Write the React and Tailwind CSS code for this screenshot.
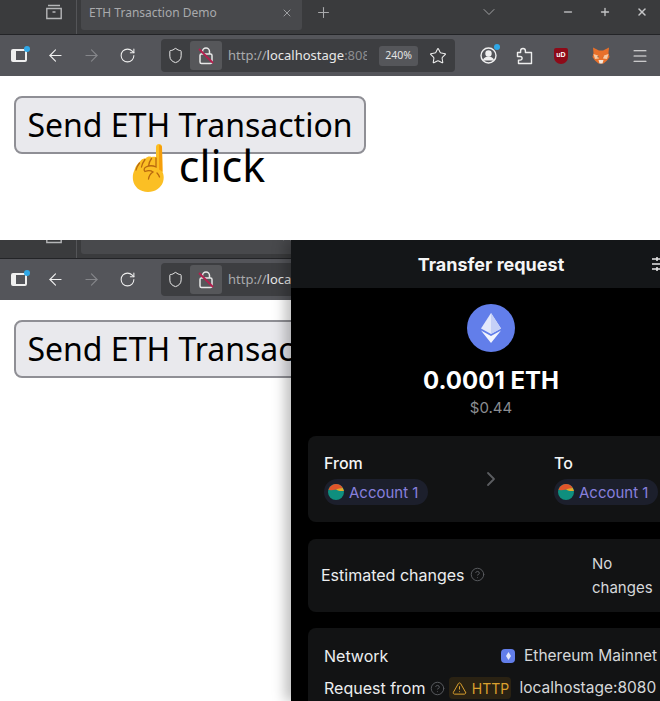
import { ArrowLeft, ArrowRight, RotateCw, Shield, Star, Menu, ChevronDown, ChevronRight, Plus, X, Minus, CircleHelp, TriangleAlert } from "lucide-react";

function TabBar({ height, title }) {
  return (
    <div className={`${height} flex items-end overflow-hidden bg-[#3a3b3d] border-b border-[#232427] shrink-0`}>
      <div className="h-[34px] w-full flex shrink-0 relative">
        <div className="w-[77px] border-r border-[#545558] flex justify-end pr-[13px] pt-[4px] shrink-0">
          <svg width="18" height="16" viewBox="0 0 18 16" fill="none" stroke="#b5b6b8" strokeWidth="1.4">
            <path d="M3 1.500h12M1.800 4.500h14.400v10H1.800zM7.500 8h3" />
          </svg>
        </div>
        <div className="ml-[4px] w-[221px] h-[30px] bg-[#48494c] rounded-b-[3px] flex items-start pt-[4px] pl-[8px] pr-[9px] shrink-0">
          <span className="text-[12px] leading-[18px] text-[#a9aaac] font-['Noto_Sans',sans-serif] flex-1">{title}</span>
          <X size={12} color="#b4b5b7" strokeWidth={1.6} className="mt-[3px]" />
        </div>
        <Plus size={17} color="#a9aaac" strokeWidth={1.5} className="ml-[13px] mt-[4px]" />
        <ChevronDown size={20} color="#a0a1a3" strokeWidth={1.2} className="ml-[147px] mt-[2px]" />
        <Minus size={12} color="#b5b6b8" strokeWidth={2.6} className="ml-[63px] mt-[6px]" />
        <Plus size={12} color="#c5c6c8" strokeWidth={2.6} className="ml-[25px] mt-[6px]" />
        <X size={12} color="#c5c6c8" strokeWidth={3} className="ml-[25px] mt-[6px]" />
      </div>
    </div>
  );
}

function ToolIcon({ children, className = "" }) {
  return <div className={`w-9 h-full flex items-center justify-center shrink-0 ${className}`}>{children}</div>;
}

function SlashedLock() {
  return (
    <svg width="16" height="19" viewBox="0 0 16 19" fill="none">
      <path d="M4.500 8V5.500a3.500 3.500 0 0 1 7 0V8" stroke="#e8e8e8" strokeWidth="1.500" />
      <rect x="2" y="8" width="12" height="9.500" rx="1.500" stroke="#e8e8e8" strokeWidth="1.500" />
      <path d="M1 3l14 14" stroke="#b3204e" strokeWidth="2" />
    </svg>
  );
}

function Fox() {
  return (
    <svg width="18" height="17" viewBox="0 0 18 17">
      <path d="M1 0.500L7 3.500h4l6-3L16.500 6l1 4-2.500 3.500-3.500 3H6.500l-3.500-3L0.500 10l1-4z" fill="#e8702a" />
      <path d="M1.500 7l4.500 1.500 1 3-4 .5zM16.500 7l-4.500 1.500-1 3 4 .5z" fill="#f7c9a2" />
      <path d="M6.500 13h5l-1 3.500h-3z" fill="#f5e6d8" />
      <path d="M5.500 9l1.500 1-1.200.6zM12.500 9l-1.500 1-1.200.6z" fill="#3a2a20" />
    </svg>
  );
}

function PuzzleOutline() {
  return (
    <svg width="17" height="18" viewBox="0 0 17 18" fill="none" stroke="#eeeeee" strokeWidth="1.400" strokeLinejoin="round">
      <path d="M7 1.500c1.400 0 2.400 1 2.400 2.200V5.500H15.500v11H2.500v-3.400h1.700c1.100 0 1.900-.8 1.900-1.800s-.8-1.800-1.900-1.800H1.500V5.500h3.100V3.700C4.600 2.500 5.600 1.500 7 1.500z" />
    </svg>
  );
}

function Toolbar() {
  return (
    <div className="h-[41px] bg-[#54555a] flex pl-px shrink-0">
      <ToolIcon>
        <div className="relative w-[16px] h-[13px] border-2 border-[#efefef] border-l-[5px] rounded-[2px]">
          <div className="absolute -top-[5px] -right-[5px] w-[6px] h-[6px] rounded-full bg-[#2fa8e8]" />
        </div>
      </ToolIcon>
      <ToolIcon><ArrowLeft size={19} color="#f0f0f0" strokeWidth={1.4} /></ToolIcon>
      <ToolIcon><ArrowRight size={19} color="#85868a" strokeWidth={1.4} /></ToolIcon>
      <ToolIcon><RotateCw size={17} color="#eeeeee" strokeWidth={1.5} /></ToolIcon>
      <div className="ml-4 my-[4px] w-[294px] bg-[#3d3e41] rounded-[4px] flex items-center overflow-hidden shrink-0">
        <div className="w-[29px] flex justify-center shrink-0"><Shield size={17} color="#eeeeee" strokeWidth={1.4} /></div>
        <div className="w-[32px] h-[29px] bg-[#56575a] rounded-[3px] flex items-center justify-center shrink-0"><SlashedLock /></div>
        <div className="ml-[6px] w-[139px] overflow-hidden whitespace-nowrap text-[13px] font-['Noto_Sans',sans-serif] shrink-0">
          <span className="text-[#a9aaac]">http://</span><span className="text-[#e8e8e8]">localhostage</span><span className="text-[#8c8d90]">:8080</span>
        </div>
        <div className="ml-[12px] w-[39px] h-[20px] bg-[#55565a] rounded-[3px] flex items-center justify-center text-[10.5px] text-[#e4e4e4] font-['Noto_Sans',sans-serif] shrink-0">240%</div>
        <div className="ml-[11px] shrink-0"><Star size={18} color="#eeeeee" strokeWidth={1.4} /></div>
      </div>
      <ToolIcon className="ml-[15px]">
        <div className="relative">
          <svg width="17" height="17" viewBox="0 0 17 17" fill="none" stroke="#f0f0f0" strokeWidth="1.400">
            <circle cx="8.500" cy="8.500" r="7.500" />
            <circle cx="8.500" cy="6.500" r="2.500" fill="#f0f0f0" />
            <path d="M3.500 13.500c1-2.500 2.500-3.200 5-3.200s4 .7 5 3.200" fill="#f0f0f0" />
          </svg>
          <div className="absolute -top-[3px] -right-[3px] w-[6px] h-[6px] rounded-full bg-[#2fa8e8]" />
        </div>
      </ToolIcon>
      <ToolIcon><PuzzleOutline /></ToolIcon>
      <ToolIcon className="ml-px">
        <div className="w-[14px] h-[16px] bg-[#8e0a18] rounded-b-[7px] rounded-t-[2px] flex items-center justify-center text-[7px] font-bold text-white font-['Liberation_Sans',sans-serif]">uD</div>
      </ToolIcon>
      <ToolIcon className="ml-[4px]"><Fox /></ToolIcon>
      <ToolIcon className="ml-[3px]"><Menu size={18} color="#f0f0f0" strokeWidth={1.4} /></ToolIcon>
    </div>
  );
}

function PageButton() {
  return (
    <button className="h-[58px] w-[352px] shrink-0 bg-[#e9e9ed] border-2 border-[#8f8f95] rounded-[8px] text-[32px] leading-none text-black font-['Noto_Sans',sans-serif] whitespace-nowrap">
      Send ETH Transaction
    </button>
  );
}

function PointingHand() {
  return (
    <svg width="32" height="48" viewBox="0 0 32 48" className="shrink-0">
      <path d="M24 3c0-4 6-4 6 0l.5 25c1.500 3 1.500 7 .5 10-2 6-8 10-15 10-8 0-14-5-15-12-.5-4 0-7 1.500-10 1-4 3-6 5-8 2-3 4-4 6-3.500 2-2 4-2.500 6-1.500 1.500-.5 3-.5 4.500 0z" fill="#fbbf24" />
      <path d="M27 1c2 0 3 1 3 2.500l.5 24.500c-1-1-2.500-2-3.500-2.500z" fill="#f59e0b" />
      <path d="M7.500 19c-1.500 2-3 4-3.500 7M13 15.500c-1.500 2-3 4.500-3.500 7.500M19.500 14.500c-1.500 2-2.500 4.500-3 7.500M24 14v9c-3-1.500-7-1.500-10 0-2 1-2.500 3-1 4.500 2.500-1 6-1 8 .5-2.500 1.500-4 4-4.500 7M25 29c1 1 2 2.500 2.500 4" fill="none" stroke="#b8690f" strokeWidth="1.300" strokeLinecap="round" />
    </svg>
  );
}

function AccountPill() {
  return (
    <div className="h-[26px] w-[104px] rounded-full bg-[#1c1f2c] flex items-center pl-[4px] gap-[5px]">
      <svg width="16" height="16" viewBox="0 0 16 16" className="shrink-0">
        <circle cx="8" cy="8" r="8" fill="#0f8f7e" />
        <path d="M1.200 4C3 1.500 5.500 0 8 0c3 0 5.500 1.500 6.800 4-2-.5-3 1.500-5 1.500S5 6.500 0.500 6z" fill="#e0552a" />
        <path d="M8 5.500c2-.4 4-1.500 6.800-1.500L16 7c-3 0-5 .5-8-1.500z" fill="#e6a92a" />
      </svg>
      <span className="text-[15px] leading-none text-[#8780dd] whitespace-nowrap">Account 1</span>
    </div>
  );
}

function EthLogo() {
  return (
    <div className="w-12 h-12 rounded-full bg-[#627eea] flex items-center justify-center">
      <svg width="20" height="30" viewBox="0 0 20 30">
        <path d="M10 0L0 15.500 10 21l10-5.500z" fill="#e3e8fb" />
        <path d="M10 0v21l10-5.500z" fill="#c5d0f7" />
        <path d="M0 17.500L10 30l10-12.500L10 23z" fill="#f2f4fd" />
      </svg>
    </div>
  );
}

function WalletPanel() {
  return (
    <div className="absolute top-0 bottom-0 left-[291px] right-0 overflow-hidden bg-black shadow-[-6px_0_12px_rgba(0,0,0,0.25)] font-['Inter',sans-serif]">
      <div className="w-[400px]">
        <div className="h-[48px] bg-[#141618] grid grid-cols-[1fr_auto_1fr] items-center">
          <div />
          <div className="text-[18px] font-bold text-[#f4f5f6]">Transfer request</div>
          <div className="pl-[88px]">
            <svg width="16" height="14" viewBox="0 0 16 14" fill="none" stroke="#e8e8e8" strokeWidth="1.500">
              <path d="M0 2h16M0 7h16M0 12h16M5 0v4M10 5v4M5 10v4" />
            </svg>
          </div>
        </div>
        <div className="pt-[16px] flex flex-col items-center">
          <EthLogo />
          <div className="mt-[14px] text-[24px] leading-[30px] font-bold text-white">0.0001 ETH</div>
          <div className="mt-[2px] text-[15px] leading-[20px] text-[#8b8d91]">$0.44</div>
        </div>
        <div className="mx-[17px] mt-[18px] h-[86px] rounded-[8px] bg-[#121314] flex items-center pl-[16px]">
          <div className="w-[159px] shrink-0">
            <div className="text-[16px] leading-[22px] font-medium text-[#f4f5f6] mb-[5px] -mt-px">From</div>
            <AccountPill />
          </div>
          <ChevronRight size={24} color="#5b5d61" strokeWidth={1.8} className="shrink-0 -ml-[4px]" />
          <div className="ml-[51px] shrink-0">
            <div className="text-[16px] leading-[22px] font-medium text-[#f4f5f6] mb-[5px] -mt-px">To</div>
            <AccountPill />
          </div>
        </div>
        <div className="mx-[17px] mt-[17px] h-[73px] rounded-[8px] bg-[#121314] flex items-center pl-[13px] pb-[2px]">
          <div className="w-[271px] flex items-center gap-[5px] shrink-0">
            <span className="text-[16px] text-[#eceef0]">Estimated changes</span>
            <CircleHelp size={15} color="#5b5d61" strokeWidth={1.5} />
          </div>
          <div className="w-[70px] mt-[2px] text-[15px] leading-[24px] text-[#d6d8da]">No changes</div>
        </div>
        <div className="mx-[17px] mt-[16px] rounded-t-[8px] bg-[#121314] pl-[16px] pt-[17px] h-[73px] flex flex-col gap-[10px]">
          <div className="h-[22px] flex items-center">
            <span className="w-[177px] text-[16px] text-[#eceef0] shrink-0">Network</span>
            <div className="w-[14px] h-[14px] rounded-[4px] bg-[#627eea] flex items-center justify-center shrink-0">
              <svg width="5" height="8" viewBox="0 0 5 8"><path d="M2.500 0L0 4l2.500 4L5 4z" fill="#e3e8fb" /></svg>
            </div>
            <span className="ml-[9px] text-[15.5px] text-[#d6d8da] whitespace-nowrap">Ethereum Mainnet</span>
          </div>
          <div className="h-[22px] flex items-center">
            <span className="text-[16px] text-[#eceef0] whitespace-nowrap">Request from</span>
            <CircleHelp size={15} color="#5b5d61" strokeWidth={1.5} className="ml-[5px] shrink-0" />
            <div className="ml-[4px] w-[62px] h-[22px] rounded-[4px] bg-[#2a2213] flex items-center justify-center gap-[5px] shrink-0">
              <TriangleAlert size={15} color="#dba02e" strokeWidth={1.6} />
              <span className="text-[14px] text-[#dba02e]">HTTP</span>
            </div>
            <span className="ml-[8px] text-[15.5px] text-[#d6d8da] whitespace-nowrap">localhostage:8080</span>
          </div>
        </div>
      </div>
    </div>
  );
}

export default function App() {
  return (
    <div className="w-[660px] h-[701px] bg-white overflow-hidden">
      <div className="h-[240px] flex flex-col">
        <TabBar height="h-[35px]" title="ETH Transaction Demo" />
        <Toolbar />
        <div className="pl-[14px] pt-[20px]">
          <PageButton />
          <div className="w-[352px] -mt-[10px] pl-[17px] flex justify-center items-start gap-[15px] relative">
            <PointingHand />
            <span className="text-[43px] leading-[44px] text-black font-['Noto_Sans',sans-serif]">click</span>
          </div>
        </div>
      </div>
      <div className="h-[461px] relative flex flex-col overflow-hidden">
        <TabBar height="h-[19px]" />
        <Toolbar />
        <div className="pl-[14px] pt-[20px]">
          <PageButton />
        </div>
        <WalletPanel />
      </div>
    </div>
  );
}
